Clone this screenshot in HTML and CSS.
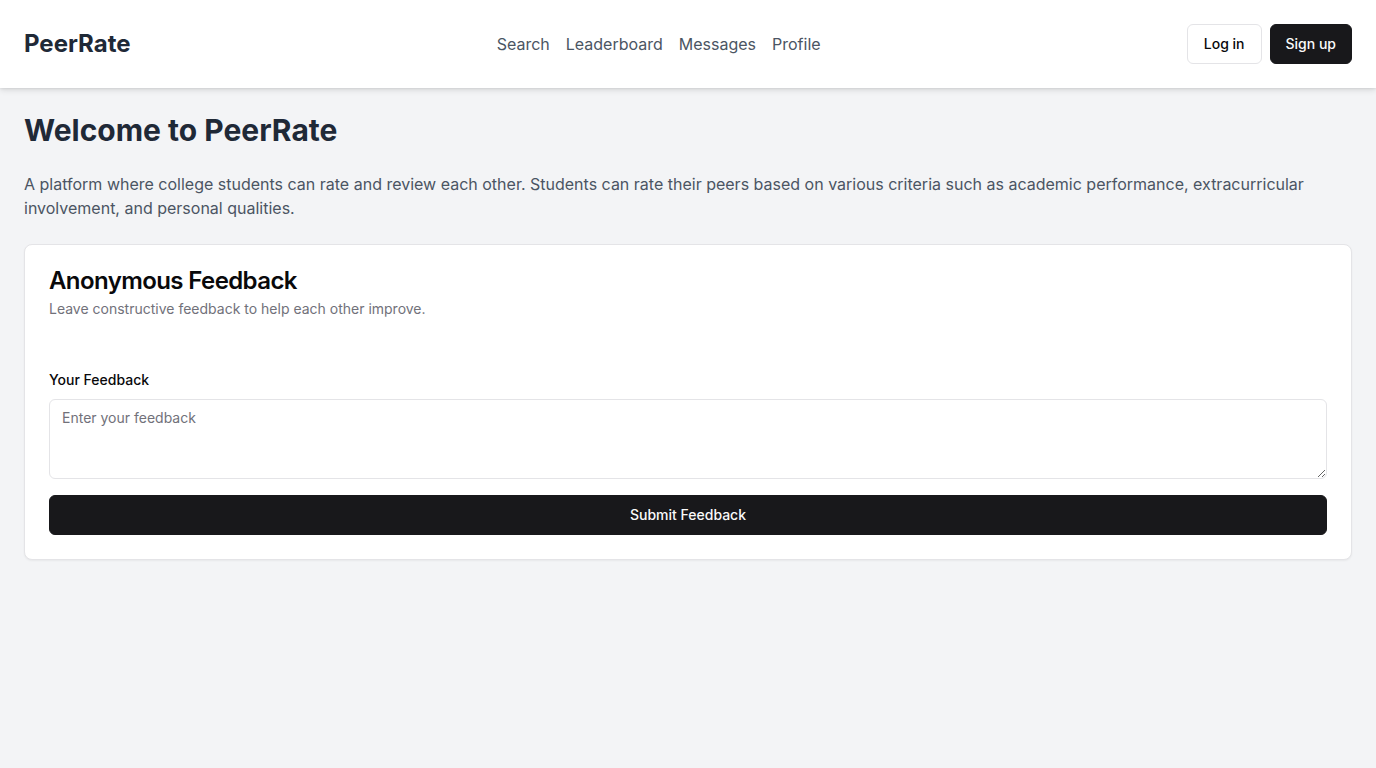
FILE: index.html
```html
<!DOCTYPE html>
<html lang="en">
<head>
<meta charset="utf-8">
<title>PeerRate</title>
<link rel="stylesheet" href="styles.css">
</head>
<body>
<header class="topbar">
  <a class="logo" href="#">PeerRate</a>
  <nav class="nav">
    <a href="#">Search</a>
    <a href="#">Leaderboard</a>
    <a href="#">Messages</a>
    <a href="#">Profile</a>
  </nav>
  <div class="auth">
    <button class="btn btn-outline">Log in</button>
    <button class="btn btn-dark btn-signup">Sign up</button>
  </div>
</header>
<main class="main">
  <h1 class="title">Welcome to PeerRate</h1>
  <p class="intro">A platform where college students can rate and review each other. Students can rate their peers based on various criteria such as academic performance, extracurricular involvement, and personal qualities.</p>
  <section class="card">
    <div class="card-header">
      <h2 class="card-title">Anonymous Feedback</h2>
      <p class="card-desc">Leave constructive feedback to help each other improve.</p>
    </div>
    <form class="card-content">
      <label class="label" for="fb">Your Feedback</label>
      <textarea id="fb" class="textarea" placeholder="Enter your feedback"></textarea>
      <button type="button" class="btn btn-dark btn-full">Submit Feedback</button>
    </form>
  </section>
</main>
</body>
</html>
```

FILE: styles.css
```css
* { box-sizing: border-box; }
html, body { margin: 0; padding: 0; }
body {
  font-family: Inter, "Liberation Sans", sans-serif;
  background: #f3f4f6;
  color: #09090b;
  min-height: 768px;
}
a { text-decoration: none; color: inherit; }

.topbar {
  height: 88px;
  background: #ffffff;
  box-shadow: 0 2px 6px rgba(0,0,0,0.12), 0 1px 2px rgba(0,0,0,0.06);
  display: flex;
  align-items: center;
  justify-content: space-between;
  padding: 0 24px;
  position: relative;
  z-index: 1;
}
.logo {
  font-size: 24px;
  font-weight: 700;
  color: #1f2937;
  line-height: 32px;
}
.nav {
  display: flex;
  gap: 16px;
  font-size: 16px;
  color: #4b5563;
  line-height: 24px;
}
.auth { display: flex; gap: 8px; }

.btn {
  font-family: inherit;
  font-size: 14px;
  font-weight: 500;
  height: 40px;
  padding: 0 16px;
  border-radius: 6px;
  cursor: pointer;
  line-height: 20px;
}
.btn-outline {
  background: #ffffff;
  border: 1px solid #e4e4e7;
  color: #09090b;
}
.btn-dark {
  background: #18181b;
  border: 1px solid #18181b;
  color: #fafafa;
}
.btn-signup { padding: 0 15px; }
.btn-full { width: 100%; display: block; }

.main { padding: 24px; }
.title {
  margin: 0;
  font-size: 30px;
  line-height: 36px;
  font-weight: 700;
  color: #1f2937;
}
.intro {
  margin: 24px 0 24px;
  font-size: 16px;
  line-height: 24px;
  color: #4b5563;
}
.card {
  background: #ffffff;
  border: 1px solid #e4e4e7;
  border-radius: 8px;
  box-shadow: 0 1px 2px rgba(0,0,0,0.05);
}
.card-header {
  padding: 24px 24px 0;
  display: flex;
  flex-direction: column;
  gap: 6px;
}
.card-title {
  margin: 0;
  font-size: 24px;
  line-height: 24px;
  font-weight: 600;
  letter-spacing: -0.6px;
  color: #09090b;
}
.card-desc {
  margin: 0;
  font-size: 14px;
  line-height: 20px;
  color: #71717a;
}
.card-content {
  padding: 51px 24px 24px;
  display: flex;
  flex-direction: column;
}
.label {
  font-size: 14px;
  font-weight: 500;
  line-height: 20px;
  color: #09090b;
  margin-bottom: 9px;
}
.textarea {
  font-family: inherit;
  font-size: 14px;
  line-height: 20px;
  height: 80px;
  padding: 8px 12px;
  border: 1px solid #e4e4e7;
  border-radius: 6px;
  color: #09090b;
  background: #ffffff;
  margin-bottom: 16px;
  resize: vertical;
}
.textarea::placeholder { color: #71717a; }
```
